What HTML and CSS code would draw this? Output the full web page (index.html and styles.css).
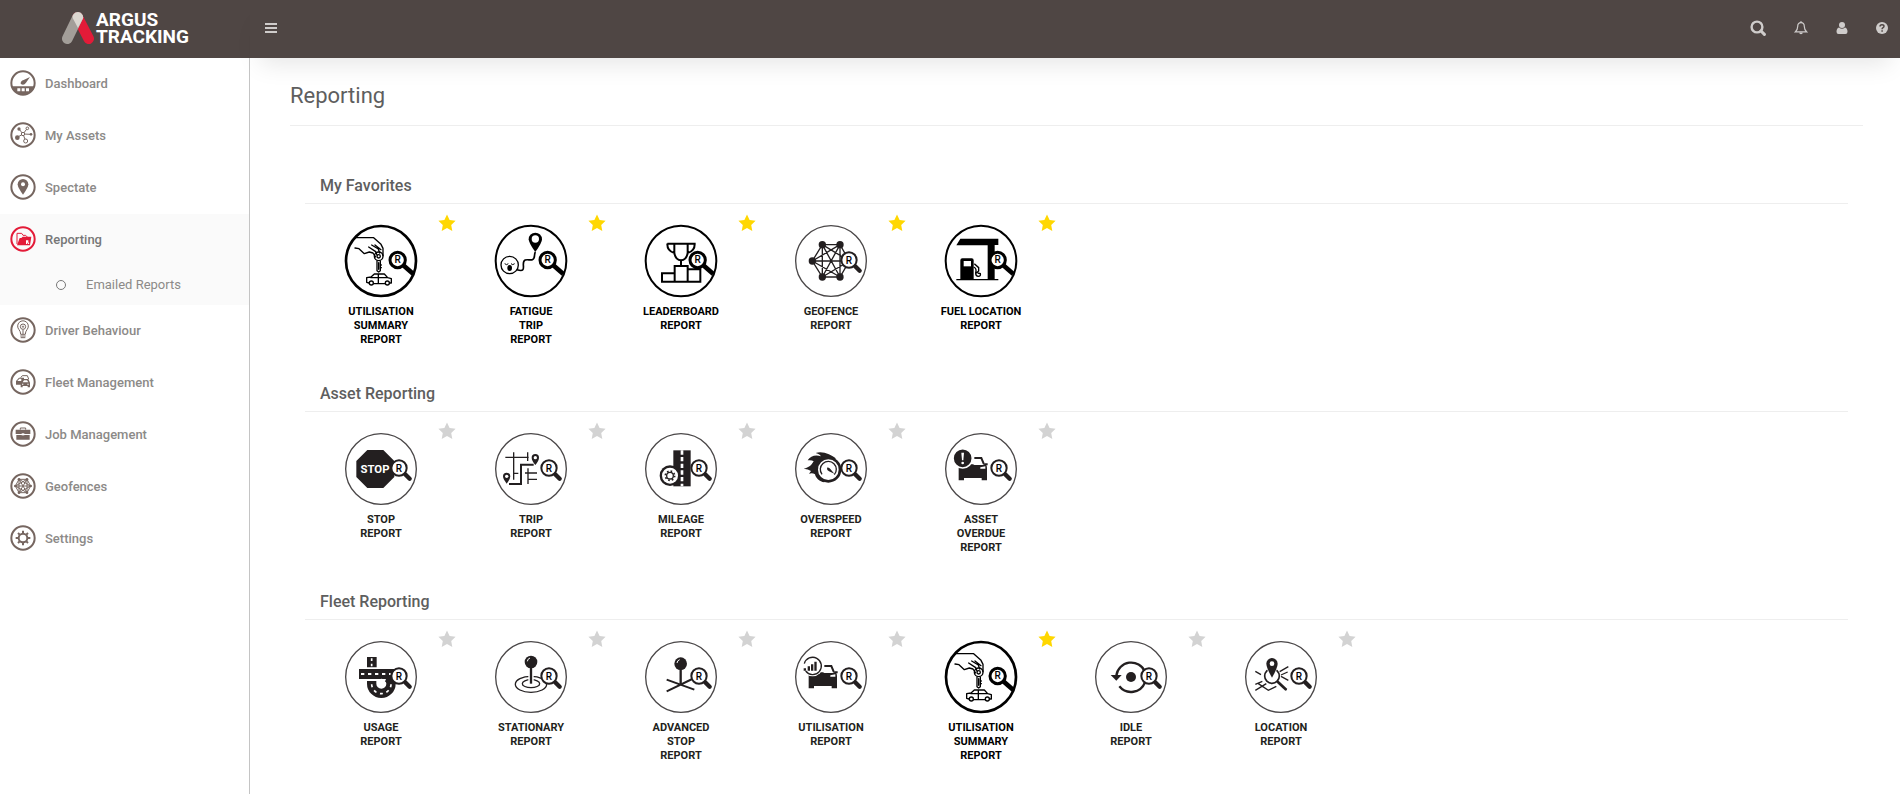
FILE: index.html
```
<!DOCTYPE html>
<html lang="en">
<head>
    <meta charset="UTF-8">
    <meta name="viewport" content="width=device-width, initial-scale=1.0">
    <title>Argus Tracking - Reporting</title>
    <link rel="stylesheet" href="styles.css">
</head>
<body>
    <!-- Shared icon parts -->
    <svg class="defs" aria-hidden="true">
        <symbol id="star" viewBox="0 0 18 18">
            <path d="M9 0.6l2.6 5.5 6 0.7-4.4 4.1 1.1 6L9 14l-5.3 2.9 1.1-6L0.4 6.8l6-0.7z"/>
        </symbol>
        <symbol id="lens" viewBox="-111 -111 222 222">
            <circle r="106" fill="none" stroke="#4a4748" stroke-width="4"/>
            <path d="M71 14L86 29" stroke="#231f20" stroke-width="13" stroke-linecap="round"/>
            <circle cx="54" cy="-3" r="23" fill="#fff" stroke="#231f20" stroke-width="6"/>
            <text x="54" y="8" class="r">R</text>
        </symbol>
        <symbol id="lens-bold" viewBox="-111 -111 222 222">
            <path d="M66 12L97 39" stroke="#000" stroke-width="14"/>
            <circle cx="50" cy="-3" r="23" fill="#fff" stroke="#000" stroke-width="9"/>
            <text x="50" y="6" class="r">R</text>
        </symbol>
        <symbol id="car" viewBox="-111 -111 222 222">
            <path d="M-67 -8q0 -6 6 -6H-24L-20 -12H8L12 -17H20V-11H16Q18 -8 18 -2V34H2V27H-51V34H-67z" fill="#231f20"/>
            <path d="M-20 -33H1L9 -14" fill="none" stroke="#231f20" stroke-width="6"/>
            <path d="M-2 -5L13 -8V-1H-2z" fill="#fff"/>
        </symbol>
        <symbol id="summary" viewBox="-111 -111 222 222">
            <circle r="105" fill="none" stroke="#000" stroke-width="8"/>
            <g fill="none" stroke="#000" stroke-width="4" stroke-linejoin="round" stroke-linecap="round">
                <path d="M-78 -70H-22L0 -50L6 -38V-16"/>
                <path d="M-78 -39L-66 -37L-50 -22L-35 -27L-24 -24L-16 -12"/>
                <path d="M-37 -42L-16 -28L-12 -18M-28 -48L-8 -36L-4 -24M-18 -48L0 -34"/>
                <circle cx="-7" cy="-14" r="13"/>
                <circle cx="-7" cy="-14" r="5"/>
                <path d="M-12 0V29L-7 33L-2 29V0M-7 5V25M-2 12H1M-2 20H1"/>
                <path d="M-43 50L-30 48L-20 39H10L20 50L31 53V66H26M-43 50V64L-36 66M-22 68H12M-30 50H20M-8 39V66"/>
                <circle cx="-29" cy="66" r="6"/>
                <circle cx="19" cy="66" r="6"/>
            </g>
        </symbol>
    </svg>

    <header>
        <a class="logo" href="#" aria-label="Argus Tracking">
            <svg class="logo-mark" viewBox="0 0 96 96" aria-hidden="true">
                <path d="M47 16L80 80" stroke="#e31b38" stroke-width="32" stroke-linecap="round"/>
                <path d="M47 16L16 80" stroke="#a39e99" stroke-width="32" stroke-linecap="round"/>
                <path d="M33 9Q39 0 48 0Q57 0 62 9L64 17L48 48L32 18Q31 12 33 9z" fill="#dbd6d0"/>
            </svg>
            <span class="logo-text">ARGUS<br>TRACKING</span>
        </a>
        <div class="topbar">
            <button class="toggle" aria-label="Toggle menu">
                <svg width="12" height="10" viewBox="0 0 12 10" fill="currentColor"><path d="M0 0h12v2H0zM0 4h12v2H0zM0 8h12v2H0z"/></svg>
            </button>
            <div class="actions">
                <button aria-label="Search">
                    <svg width="16" height="16" viewBox="0 0 16 16" fill="none" stroke="currentColor"><circle cx="7" cy="7" r="5.4" stroke-width="2.4"/><path d="M11 11l3.4 3.4" stroke-width="3" stroke-linecap="round"/></svg>
                </button>
                <button aria-label="Notifications">
                    <svg width="14" height="14" viewBox="0 0 14 14"><path d="M7 1.6C4.600 1.600 3.700 3.500 3.700 5.500C3.700 8.500 2.600 9.700 1.300 10.900H12.700C11.400 9.700 10.300 8.500 10.300 5.500C10.300 3.500 9.400 1.600 7 1.600z" fill="none" stroke="currentColor" stroke-width="1.200"/><path d="M6.300 0.300h1.400v1.400H6.300zM5.200 11.500h3.600a1.800 1.800 0 0 1-3.600 0z" fill="currentColor"/></svg>
                </button>
                <button aria-label="Account">
                    <svg width="12" height="12" viewBox="0 0 12 12" fill="currentColor"><circle cx="6" cy="3" r="3"/><path d="M3 5.400Q6 8 9 5.400Q11.500 6 11.500 9.800Q11.500 12 9.500 12H2.500Q0.500 12 0.500 9.800Q0.500 6 3 5.400z"/></svg>
                </button>
                <button aria-label="Help">
                    <svg width="12" height="12" viewBox="0 0 12 12"><circle cx="6" cy="6" r="6" fill="currentColor"/><path d="M4 4.500Q4 2.700 6 2.700Q8 2.700 8 4.300Q8 5.300 6.800 5.900Q6.100 6.300 6.100 7.200M6.100 8.300V9.700" fill="none" stroke="#4f4644" stroke-width="1.500"/></svg>
                </button>
            </div>
        </div>
    </header>

    <div class="page">
        <nav class="sidebar">
            <ul>
                <li><a href="#">
                    <svg viewBox="-39 -39 78 78"><circle r="35"/><path class="solid" d="M-35 10H35Q28 35 0 35Q-28 35 -35 10zM-7 2Q-8 -6 2 -9L21 -18L9 -1Q2 9 -7 2z"/><path class="cut" d="M-17 16h9v9h-9zM-4 16h9v9h-9zM9 16h9v9h-9z"/></svg>
                    Dashboard</a></li>
                <li><a href="#">
                    <svg viewBox="-39 -39 78 78"><circle r="35"/><path class="thin" d="M0 -3L-12 -18M0 -3L13 -20M0 -3L24 -2M0 -3L-17 7M0 -3L8 18"/><circle class="solid" cx="-17" cy="8" r="7"/><circle class="solid" cx="-12" cy="-18" r="5"/><circle class="solid" cx="24" cy="-2" r="4"/><circle class="open" cx="0" cy="-3" r="5"/><circle class="open" cx="13" cy="-20" r="4"/><circle class="open" cx="8" cy="18" r="6"/></svg>
                    My Assets</a></li>
                <li><a href="#">
                    <svg viewBox="-39 -39 78 78"><circle r="35"/><path class="solid" d="M0 23Q-16 2 -16 -8A16 16 0 0 1 16 -8Q16 2 0 23z"/><circle class="cut" cy="-8" r="6"/></svg>
                    Spectate</a></li>
                <li class="active"><a href="#">
                    <svg viewBox="-39 -39 78 78"><circle r="35"/><path class="thin" d="M-18 15V-17H-4L0 -11H8L13 -6V-2"/><path class="solid" d="M-18 19L-10 -3H-5L-1 -7H25L21 19z"/><path class="cut" d="M9 4h7v5l3 6h-4l-3 -5v5h-3z"/></svg>
                    Reporting</a>
                    <ul class="submenu">
                        <li><a href="#">Emailed Reports</a></li>
                    </ul>
                </li>
                <li><a href="#">
                    <svg viewBox="-39 -39 78 78"><circle r="35"/><path class="thin" d="M-7 13Q-7 5 -12 -1A16 16 0 1 1 12 -1Q7 5 7 13z"/><circle class="thin" cy="-10" r="8"/><circle class="thin" cy="-10" r="2"/><path class="thin" d="M0 -1V12M-8 18H8M-7 23H7"/></svg>
                    Driver Behaviour</a></li>
                <li><a href="#">
                    <svg viewBox="-39 -39 78 78"><circle r="35"/><path class="solid" d="M-21 8V-3L-12 -13H3V8z"/><path class="thin" d="M-7 -13L-2 -19H13L17 -9"/><path class="cut" d="M-17 -3l6 -7h6v7z"/><path class="solid" d="M-7 16V2L-1 -9H16L21 2V16H14V12H-1V16z"/><path class="cut" d="M-1 1L3 -5H12L16 1zM-3 5h4v3h-4zM13 5h4v3h-4z"/></svg>
                    Fleet Management</a></li>
                <li><a href="#">
                    <svg viewBox="-39 -39 78 78"><circle r="35"/><path class="thin" d="M-8 -13V-18H8V-13"/><path class="solid" d="M-22 -13H22V0H-22zM-20 3H20V17H-20z"/><path class="cut" d="M-4 -2h8v6h-8z"/></svg>
                    Job Management</a></li>
                <li><a href="#">
                    <svg viewBox="-39 -39 78 78"><circle r="35"/><path class="thin" d="M-12 -20H12L23 0L12 20H-12L-23 0zM-12 -20L12 20M12 -20L-12 20M-23 0H23M-12 -20V20M12 -20V20M-23 0L12 -20M-23 0L12 20M23 0L-12 -20M23 0L-12 20"/><g class="solid"><circle cx="-12" cy="-20" r="4"/><circle cx="12" cy="-20" r="4"/><circle cx="23" r="4"/><circle cx="-23" r="4"/><circle cx="12" cy="20" r="4"/><circle cx="-12" cy="20" r="4"/></g></svg>
                    Geofences</a></li>
                <li><a href="#">
                    <svg viewBox="-39 -39 78 78"><circle r="35"/><circle r="13"/><path d="M0 -14V-22M0 14V22M-14 0H-22M14 0H22M-10 -10L-15 -15M10 10L15 15M-10 10L-15 15M10 -10L15 -15"/></svg>
                    Settings</a></li>
            </ul>
        </nav>

        <main>
            <h1>Reporting</h1>

            <section>
                <h2>My Favorites</h2>
                <ul class="reports">
                    <li>
                        <a href="#" class="bold">
                            <svg viewBox="-111 -111 222 222"><use href="#summary" x="-111" y="-111" width="222" height="222"/><use href="#lens-bold" x="-111" y="-111" width="222" height="222"/></svg>
                            <span>UTILISATION<br>SUMMARY<br>REPORT</span>
                        </a>
                        <button class="fav on" aria-label="Remove from favorites"><svg><use href="#star"/></svg></button>
                    </li>
                    <li>
                        <a href="#" class="bold">
                            <svg viewBox="-111 -111 222 222">
                                <circle r="106" fill="none" stroke="#000" stroke-width="6"/>
                                <path d="M13 -27Q-7 -54 -7 -65A20 20 0 0 1 33 -65Q33 -54 13 -27z"/><circle cx="13" cy="-66" r="11" fill="#fff"/>
                                <path d="M-42 26C-18 34 -23 20 -23 10C-23 -12 -4 0 4 -4C14 -8 8 -18 13 -27" fill="none" stroke="#000" stroke-width="5"/>
                                <circle cx="-64" cy="12" r="26" fill="#fff" stroke="#000" stroke-width="4"/>
                                <path d="M-79 8Q-73 14 -68 8M-60 8Q-55 14 -49 8" fill="none" stroke="#000" stroke-width="3"/><ellipse cx="-64" cy="21" rx="7" ry="9"/>
                                <use href="#lens-bold" x="-111" y="-111" width="222" height="222"/>
                            </svg>
                            <span>FATIGUE<br>TRIP<br>REPORT</span>
                        </a>
                        <button class="fav on" aria-label="Remove from favorites"><svg><use href="#star"/></svg></button>
                    </li>
                    <li>
                        <a href="#" class="bold">
                            <svg viewBox="-111 -111 222 222">
                                <circle r="106" fill="none" stroke="#000" stroke-width="6"/>
                                <g fill="none" stroke="#000" stroke-width="6">
                                    <path d="M-57 37H-19V62H-57zM-19 15H20V62H-19zM20 25H58V62H20zM0 15V-2"/>
                                    <path d="M-41 -52H41Q42 -30 20 -24M-41 -52Q-42 -30 -20 -24M-20 -52V-24Q-16 -2 0 -2Q16 -2 20 -24V-52"/>
                                </g>
                                <use href="#lens-bold" x="-111" y="-111" width="222" height="222"/>
                            </svg>
                            <span>LEADERBOARD<br>REPORT</span>
                        </a>
                        <button class="fav on" aria-label="Remove from favorites"><svg><use href="#star"/></svg></button>
                    </li>
                    <li>
                        <a href="#">
                            <svg viewBox="-111 -111 222 222">
                                <path d="M-26 -49H27L55 0L27 48H-26L-56 0zM-26 -49V48M27 -49V48M-56 0H55M-26 -49L27 48M27 -49L-26 48M-56 0L27 -49M-56 0L27 48M55 0L-26 -49M55 0L-26 48" fill="none" stroke="#231f20" stroke-width="4"/>
                                <g fill="#231f20"><circle cx="-26" cy="-49" r="11"/><circle cx="27" cy="-49" r="11"/><circle cx="-56" r="11"/><circle cx="-26" cy="48" r="11"/><circle cx="27" cy="48" r="11"/></g>
                                <use href="#lens" x="-111" y="-111" width="222" height="222"/>
                            </svg>
                            <span>GEOFENCE<br>REPORT</span>
                        </a>
                        <button class="fav on" aria-label="Remove from favorites"><svg><use href="#star"/></svg></button>
                    </li>
                    <li>
                        <a href="#" class="bold">
                            <svg viewBox="-111 -111 222 222">
                                <circle r="106" fill="none" stroke="#000" stroke-width="6"/>
                                <path d="M-74 -47L-62 -67H52V-48H41V56H20V-47zM-62 55V-2Q-62 -8 -56 -8H-28Q-22 -8 -22 -2V55zM-74 54H52V58H-74z"/>
                                <path d="M-52 0H-30V16H-52z" fill="#fff"/>
                                <path d="M-20 8L-7 20V30L-14 36M-22 18Q-12 22 -16 36Q-16 46 -8 46Q0 46 -2 38L-10 36" fill="none" stroke="#000" stroke-width="4"/>
                                <use href="#lens-bold" x="-111" y="-111" width="222" height="222"/>
                            </svg>
                            <span>FUEL LOCATION<br>REPORT</span>
                        </a>
                        <button class="fav on" aria-label="Remove from favorites"><svg><use href="#star"/></svg></button>
                    </li>
                </ul>
            </section>

            <section>
                <h2>Asset Reporting</h2>
                <ul class="reports">
                    <li>
                        <a href="#">
                            <svg viewBox="-111 -111 222 222">
                                <path d="M-41 -57H7L40 -24V24L7 57H-41L-74 24V-24z" fill="#231f20"/>
                                <text x="-18" y="12" class="stop">STOP</text>
                                <use href="#lens" x="-111" y="-111" width="222" height="222"/>
                            </svg>
                            <span>STOP<br>REPORT</span>
                        </a>
                        <button class="fav" aria-label="Add to favorites"><svg><use href="#star"/></svg></button>
                    </li>
                    <li>
                        <a href="#">
                            <svg viewBox="-111 -111 222 222">
                                <path d="M-77 -35H-7M-52 -50V32M-10 -50V-24M-52 13H-38M-18 12H18M-9 -2V45M-9 31H18" fill="none" stroke="#231f20" stroke-width="4"/>
                                <path d="M-66 45H-30V-13H8" fill="none" stroke="#231f20" stroke-width="6"/>
                                <path d="M13 -12Q2 -26 2 -34A11 11 0 0 1 24 -34Q24 -26 13 -12zM-73 44Q-84 30 -84 22A11 11 0 0 1 -62 22Q-62 30 -73 44z" fill="#231f20"/>
                                <circle cx="13" cy="-34" r="5" fill="#fff"/><circle cx="-73" cy="22" r="5" fill="#fff"/>
                                <use href="#lens" x="-111" y="-111" width="222" height="222"/>
                            </svg>
                            <span>TRIP<br>REPORT</span>
                        </a>
                        <button class="fav" aria-label="Add to favorites"><svg><use href="#star"/></svg></button>
                    </li>
                    <li>
                        <a href="#">
                            <svg viewBox="-111 -111 222 222">
                                <path d="M-23 -56H29V52H-23z" fill="#231f20"/>
                                <path d="M3 -56V52" stroke="#fff" stroke-width="8" stroke-dasharray="13 7"/>
                                <circle cx="-33" cy="20" r="31" fill="#231f20"/><circle cx="-33" cy="20" r="24" fill="#fff"/>
                                <circle cx="-33" cy="20" r="10" fill="none" stroke="#231f20" stroke-width="4"/>
                                <circle cx="-33" cy="20" r="14" fill="none" stroke="#231f20" stroke-width="5" stroke-dasharray="5 6"/>
                                <use href="#lens" x="-111" y="-111" width="222" height="222"/>
                            </svg>
                            <span>MILEAGE<br>REPORT</span>
                        </a>
                        <button class="fav" aria-label="Add to favorites"><svg><use href="#star"/></svg></button>
                    </li>
                    <li>
                        <a href="#">
                            <svg viewBox="-111 -111 222 222">
                                <path d="M14 -32C2 -44 -28 -56 -46 -48C-36 -45 -32 -42 -30 -38C-45 -43 -62 -40 -70 -26Q-58 -28 -52 -23C-58 -12 -66 -4 -82 -1Q-68 0 -60 6L-66 14Q-56 10 -48 16C-46 28 -34 38 -20 40z" fill="#231f20"/>
                                <circle cx="-8" cy="2" r="35" fill="#fff" stroke="#231f20" stroke-width="8"/>
                                <path d="M-27 16A24 24 0 1 1 10 17" fill="none" stroke="#231f20" stroke-width="4"/>
                                <path d="M-12 -4Q-6 -6 -2 0L10 14L-6 7Q-13 4 -12 -4z" fill="#231f20"/>
                                <use href="#lens" x="-111" y="-111" width="222" height="222"/>
                            </svg>
                            <span>OVERSPEED<br>REPORT</span>
                        </a>
                        <button class="fav" aria-label="Add to favorites"><svg><use href="#star"/></svg></button>
                    </li>
                    <li>
                        <a href="#">
                            <svg viewBox="-111 -111 222 222">
                                <use href="#car" x="-111" y="-111" width="222" height="222"/>
                                <circle cx="-55" cy="-32" r="29" fill="#231f20" stroke="#fff" stroke-width="5"/>
                                <path d="M-59 -49H-51L-53 -26H-57z" fill="#fff"/><circle cx="-55" cy="-18" r="4" fill="#fff"/>
                                <use href="#lens" x="-111" y="-111" width="222" height="222"/>
                            </svg>
                            <span>ASSET<br>OVERDUE<br>REPORT</span>
                        </a>
                        <button class="fav" aria-label="Add to favorites"><svg><use href="#star"/></svg></button>
                    </li>
                </ul>
            </section>

            <section>
                <h2>Fleet Reporting</h2>
                <ul class="reports">
                    <li>
                        <a href="#">
                            <svg viewBox="-111 -111 222 222">
                                <path d="M-42 -60H-13V-29H-42zM-66 -24H45V6H-66z" fill="#231f20"/>
                                <path d="M-28 12V20A29 29 0 0 0 30 20Q30 6 18 0" fill="none" stroke="#231f20" stroke-width="28"/>
                                <path d="M-28 22A29 29 0 0 0 30 20" fill="none" stroke="#fff" stroke-width="5" stroke-dasharray="9 11"/>
                                <path d="M-60 -9H30" stroke="#fff" stroke-width="6" stroke-dasharray="10 11"/>
                                <path d="M-28 -56V-48M-28 -40V-32" stroke="#fff" stroke-width="5"/>
                                <path d="M-10 12Q2 2 12 12" fill="none" stroke="#fff" stroke-width="4"/>
                                <use href="#lens" x="-111" y="-111" width="222" height="222"/>
                            </svg>
                            <span>USAGE<br>REPORT</span>
                        </a>
                        <button class="fav" aria-label="Add to favorites"><svg><use href="#star"/></svg></button>
                    </li>
                    <li>
                        <a href="#">
                            <svg viewBox="-111 -111 222 222">
                                <g fill="none" stroke="#231f20" stroke-width="4"><ellipse cx="0" cy="22" rx="47" ry="24"/><ellipse cx="0" cy="20" rx="26" ry="12"/></g>
                                <path d="M0 -40V20" stroke="#fff" stroke-width="16"/><path d="M0 -40V20" stroke="#231f20" stroke-width="7"/>
                                <circle cy="-45" r="19" fill="#231f20"/><path d="M-11 -47Q-10 -55 -3 -57" fill="none" stroke="#fff" stroke-width="3"/>
                                <use href="#lens" x="-111" y="-111" width="222" height="222"/>
                            </svg>
                            <span>STATIONARY<br>REPORT</span>
                        </a>
                        <button class="fav" aria-label="Add to favorites"><svg><use href="#star"/></svg></button>
                    </li>
                    <li>
                        <a href="#">
                            <svg viewBox="-111 -111 222 222">
                                <path d="M-43 8L40 38M-43 43L40 3" stroke="#231f20" stroke-width="6"/>
                                <path d="M-1 -40V24" stroke="#231f20" stroke-width="7"/>
                                <circle cx="-1" cy="-40" r="19" fill="#231f20"/><path d="M-12 -42Q-11 -50 -4 -52" fill="none" stroke="#fff" stroke-width="3"/>
                                <use href="#lens" x="-111" y="-111" width="222" height="222"/>
                            </svg>
                            <span>ADVANCED<br>STOP<br>REPORT</span>
                        </a>
                        <button class="fav" aria-label="Add to favorites"><svg><use href="#star"/></svg></button>
                    </li>
                    <li>
                        <a href="#">
                            <svg viewBox="-111 -111 222 222">
                                <use href="#car" x="-111" y="-111" width="222" height="222"/>
                                <circle cx="-55" cy="-33" r="31" fill="#fff"/>
                                <path d="M-80 -40A26 26 0 1 1 -76 -18" fill="none" stroke="#231f20" stroke-width="4"/>
                                <path d="M-82 -26H-75V-19H-82zM-70 -32H-63V-19H-70zM-60 -38H-53V-19H-60zM-50 -46H-43V-19H-50z" fill="#231f20"/>
                                <use href="#lens" x="-111" y="-111" width="222" height="222"/>
                            </svg>
                            <span>UTILISATION<br>REPORT</span>
                        </a>
                        <button class="fav" aria-label="Add to favorites"><svg><use href="#star"/></svg></button>
                    </li>
                    <li>
                        <a href="#" class="bold">
                            <svg viewBox="-111 -111 222 222"><use href="#summary" x="-111" y="-111" width="222" height="222"/><use href="#lens-bold" x="-111" y="-111" width="222" height="222"/></svg>
                            <span>UTILISATION<br>SUMMARY<br>REPORT</span>
                        </a>
                        <button class="fav on" aria-label="Remove from favorites"><svg><use href="#star"/></svg></button>
                    </li>
                    <li>
                        <a href="#">
                            <svg viewBox="-111 -111 222 222">
                                <circle r="15" fill="#231f20"/>
                                <path d="M-44 -4A45 45 0 0 1 42 -16M-35 28A45 45 0 0 0 42 16" fill="none" stroke="#231f20" stroke-width="7"/>
                                <path d="M-61 -6H-28L-44 11z" fill="#231f20"/>
                                <use href="#lens" x="-111" y="-111" width="222" height="222"/>
                            </svg>
                            <span>IDLE<br>REPORT</span>
                        </a>
                        <button class="fav" aria-label="Add to favorites"><svg><use href="#star"/></svg></button>
                    </li>
                    <li>
                        <a href="#">
                            <svg viewBox="-111 -111 222 222">
                                <path d="M-77 -17L-60 -7M-4 -16L22 -31M0 -6L20 -15M0 -2L22 10M-77 22L-56 13M-77 40L-44 20M-68 20L-38 40L-14 28" fill="none" stroke="#231f20" stroke-width="4"/>
                                <circle cx="-27" cy="-3" r="22" fill="#fff" stroke="#231f20" stroke-width="5"/>
                                <path d="M-10 14L14 37" stroke="#231f20" stroke-width="8" stroke-linecap="round"/>
                                <path d="M-27 2Q-44 -28 -44 -40A17 17 0 0 1 -10 -40Q-10 -28 -27 2z" fill="#231f20" stroke="#fff" stroke-width="4" paint-order="stroke"/>
                                <circle cx="-27" cy="-40" r="7" fill="#fff"/>
                                <use href="#lens" x="-111" y="-111" width="222" height="222"/>
                            </svg>
                            <span>LOCATION<br>REPORT</span>
                        </a>
                        <button class="fav" aria-label="Add to favorites"><svg><use href="#star"/></svg></button>
                    </li>
                </ul>
            </section>
        </main>
    </div>
</body>
</html>
```
FILE: styles.css
```
* {
    box-sizing: border-box;
}

body {
    margin: 0;
    min-height: 100vh;
    display: flex;
    flex-direction: column;
    font-family: Roboto, "Open Sans", sans-serif;
    background-color: #fff;
    color: #5e5e5e;
}

ul {
    list-style: none;
    margin: 0;
    padding: 0;
}

a {
    color: inherit;
    text-decoration: none;
}

button {
    padding: 0;
    border: 0;
    background: none;
    color: inherit;
    cursor: pointer;
}

button svg {
    display: block;
}

.defs {
    display: none;
}

/* Top bar */
header {
    display: flex;
    height: 58px;
    background-color: #4f4644;
    color: #cfcccb;
}

.logo {
    display: flex;
    align-items: center;
    gap: 2px;
    width: 250px;
    padding: 0 0 2px 62px;
    color: #fff;
}

.logo-mark {
    width: 32px;
    height: 32px;
}

.logo-text {
    font-size: 19px;
    font-weight: bold;
    line-height: 17px;
}

.topbar {
    flex: 1;
    display: flex;
    align-items: center;
    justify-content: space-between;
    padding: 0 12px 2px 15px;
    box-shadow: 0 16px 24px -10px rgba(0, 0, 0, 0.1);
}

.actions {
    display: flex;
    align-items: center;
    gap: 28px;
}

/* Side menu */
.page {
    flex: 1;
    display: flex;
}

.sidebar {
    width: 250px;
    border-right: 1px solid #c4c4c4;
    font-size: 13px;
    font-weight: 500;
    color: #8c8a88;
}

.sidebar a {
    display: flex;
    align-items: center;
    gap: 9px;
    height: 52px;
    padding: 0 0 2px 10px;
}

.sidebar svg {
    width: 26px;
    height: 26px;
    fill: none;
    stroke: #766660;
    stroke-width: 6;
}

.sidebar .active {
    background-color: #fafafa;
    color: #777;
}

.sidebar .active svg {
    stroke: #e31b38;
}

.sidebar .thin {
    stroke-width: 3;
}

.sidebar .solid {
    fill: #766660;
    stroke: none;
}

.sidebar .active .solid {
    fill: #e31b38;
}

.sidebar .cut {
    fill: #fff;
    stroke: none;
}

.sidebar .open {
    fill: #fff;
    stroke-width: 3;
}

.sidebar .submenu a {
    height: 39px;
    gap: 20px;
    padding-left: 56px;
    font-weight: normal;
    color: #8c8a88;
}

.submenu a::before {
    content: "";
    width: 8px;
    height: 8px;
    border: 1px solid #777;
    border-radius: 50%;
}

/* Report list */
main {
    flex: 1;
    padding: 22px 37px 0 40px;
}

h1 {
    margin: 0 0 41px;
    padding-bottom: 13px;
    border-bottom: 1px solid #eee;
    font-size: 22px;
    font-weight: normal;
    line-height: 32px;
}

section {
    height: 208px;
    margin: 0 15px;
}

h2 {
    margin: 0;
    padding: 8px 15px 6px;
    border-bottom: 1px solid #eee;
    font-size: 16px;
    font-weight: 500;
    line-height: 22px;
}

.reports {
    display: flex;
    flex-wrap: wrap;
    padding-left: 1px;
}

.reports li {
    position: relative;
    width: 150px;
    padding-top: 20px;
}

.reports a {
    display: flex;
    flex-direction: column;
    align-items: center;
    gap: 7px;
    font-size: 11px;
    font-weight: bold;
    line-height: 14px;
    text-align: center;
    color: #231f20;
}

.reports a svg {
    width: 74px;
    height: 74px;
}

.reports .bold {
    color: #000;
}

.fav {
    position: absolute;
    top: 10px;
    right: 0;
    color: #d3d3d3;
}

.fav.on {
    color: #ffd700;
}

.fav svg {
    width: 18px;
    height: 18px;
    fill: currentColor;
}

.r {
    font-size: 30px;
    font-weight: 500;
    text-anchor: middle;
}

.stop {
    font-size: 34px;
    font-weight: bold;
    text-anchor: middle;
    fill: #fff;
}
```
